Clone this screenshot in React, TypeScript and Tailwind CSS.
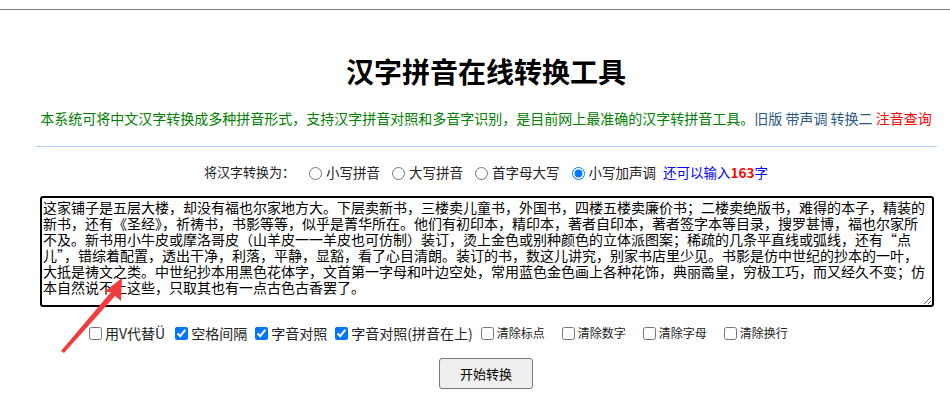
import React, { useState } from "react";

const SAMPLE =
  "这家铺子是五层大楼，却没有福也尔家地方大。下层卖新书，三楼卖儿童书，外国书，四楼五楼卖廉价书；二楼卖绝版书，难得的本子，精装的新书，还有《圣经》，祈祷书，书影等等，似乎是菁华所在。他们有初印本，精印本，著者自印本，著者签字本等目录，搜罗甚博，福也尔家所不及。新书用小牛皮或摩洛哥皮（山羊皮一一羊皮也可仿制）装订，烫上金色或别种颜色的立体派图案；稀疏的几条平直线或弧线，还有“点儿”，错综着配置，透出干净，利落，平静，显豁，看了心目清朗。装订的书，数这儿讲究，别家书店里少见。书影是仿中世纪的抄本的一叶，大抵是祷文之类。中世纪抄本用黑色花体字，文首第一字母和叶边空处，常用蓝色金色画上各种花饰，典丽矞皇，穷极工巧，而又经久不变；仿本自然说不上这些，只取其也有一点古色古香罢了。";

const modes = ["小写拼音", "大写拼音", "首字母大写", "小写加声调"];

const options = [
  { label: "用V代替Ü", checked: false, gap: "mr-[6px]", small: false },
  { label: "空格间隔", checked: true, gap: "mr-[4px]", small: false },
  { label: "字音对照", checked: true, gap: "mr-[4px]", small: false },
  { label: "字音对照(拼音在上)", checked: true, gap: "mr-[4px]", small: false },
  { label: "清除标点", checked: false, gap: "mr-[13px]", small: true },
  { label: "清除数字", checked: false, gap: "mr-[13px]", small: true },
  { label: "清除字母", checked: false, gap: "mr-[13px]", small: true },
  { label: "清除换行", checked: false, gap: "mr-[13px]", small: true },
];

export default function App() {
  const [mode, setMode] = useState("小写加声调");
  const [text, setText] = useState(SAMPLE);

  return (
    <div className="relative w-[950px] h-[399px] overflow-hidden bg-white font-['Noto_Sans_CJK_SC',sans-serif] text-[#222]">
      <div className="mt-[9px] border-t border-[#7f7f7f]" />

      <div className="ml-[35px] w-[902px]">
        <h1 className="mt-[41px] text-center text-[28px] leading-[40px] font-bold text-black">
          汉字拼音在线转换工具
        </h1>

        <p className="mt-[17px] text-center text-[14px] leading-[20px] text-[#008000]">
          本系统可将中文汉字转换成多种拼音形式，支持汉字拼音对照和多音字识别，是目前网上最准确的汉字转拼音工具。
          <a className="text-[#2c5a86]">旧版</a> <a className="text-[#2c5a86]">带声调</a>{" "}
          <a className="text-[#2c5a86]">转换二</a> <a className="text-[#ff0000]">注音查询</a>
        </p>

        <div className="mt-[18px] border-t border-[#b8d3ee]" />

        <div className="mt-[15px] flex items-center justify-center text-[13px] leading-[20px] text-[#222]">
          <span className="mr-[9px]">将汉字转换为：</span>
          {modes.map((m) => (
            <label key={m} className="flex items-center mr-[7px]">
              <input
                type="radio"
                name="mode"
                className="m-[3px_3px_0_5px] w-[13px] h-[13px]"
                checked={mode === m}
                onChange={() => setMode(m)}
              />
              <span className="ml-[1px] text-[13.5px]">{m}</span>
            </label>
          ))}
          <span className="text-[#0000ff] text-[13.5px]">
            还可以输入<b className="text-[#ff0000] font-bold">163</b>字
          </span>
        </div>

        <textarea
          className="mt-[14px] ml-[5px] block w-[894px] h-[111px] border-2 border-black rounded-[3px] px-[1px] py-[1px] text-[14px] leading-[16px] text-black font-['Noto_Sans_CJK_SC',sans-serif] outline-none resize-y"
          value={text}
          onChange={(e) => setText(e.target.value)}
        />

        <div className="mt-[16px] ml-[50px] flex items-center text-[14px] leading-[20px] text-[#222]">
          {options.map((o) => (
            <label key={o.label} className={`flex items-center ${o.gap}`}>
              <input
                type="checkbox"
                defaultChecked={o.checked}
                className="m-[3px_3px_3px_4px] w-[13px] h-[13px]"
              />
              <span className={o.small ? "text-[12px]" : ""}>{o.label}</span>
            </label>
          ))}
        </div>

        <div className="mt-[15px] flex justify-center">
          <button className="w-[94px] h-[31px] bg-[#efefef] border border-[#767676] rounded-[3px] text-[13px] text-black">
            开始转换
          </button>
        </div>
      </div>

      {/* annotation arrow */}
      <svg className="absolute left-0 top-0 pointer-events-none" width="950" height="399">
        <polygon
          points="122,278 121,301 115,296 64,353 61,351 111,292 104,292"
          fill="#f23c3c"
        />
      </svg>
    </div>
  );
}
